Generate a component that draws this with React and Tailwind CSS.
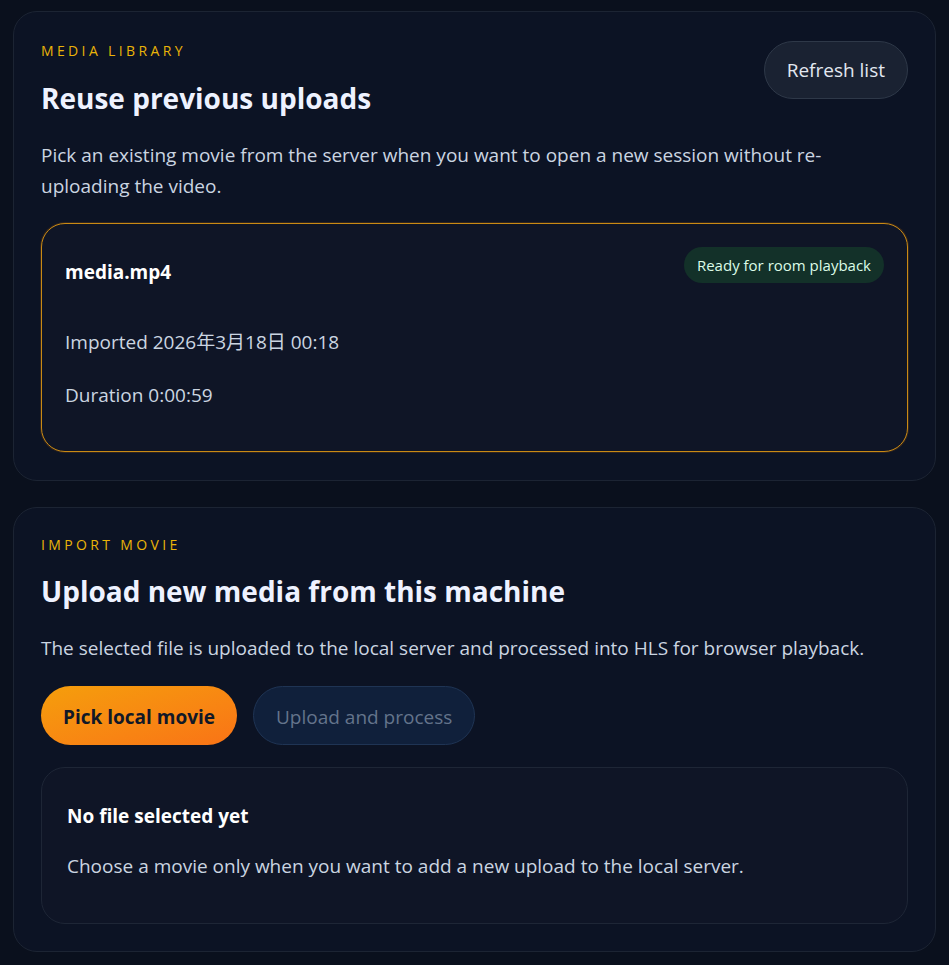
export default function App() {
  return (
    <div
      className="min-h-[965px] bg-[#0a101d] px-[13px] py-[11px] text-[#cbd5e1]"
      style={{ fontFamily: '"Open Sans", "Noto Sans CJK JP", sans-serif' }}
    >
      <div className="flex flex-col gap-[26px]">
        {/* Media library */}
        <section className="rounded-[24px] border border-[#1c2433] bg-[#0c1324] px-[27px] pt-[30px] pb-[28px]">
          <div className="flex items-start justify-between">
            <div>
              <div className="text-[14px] uppercase leading-[18px] tracking-[0.24em] text-[#eab308]">Media library</div>
              <h2 className="mt-[21px] text-[28px] font-bold leading-[34px] text-[#eef2ff]">Reuse previous uploads</h2>
            </div>
            <button className="mt-[-1px] h-[58px] rounded-full border border-[#2e3848] bg-[#1a2232] px-[22px] text-[19px] text-[#e2e8f0]">
              Refresh list
            </button>
          </div>
          <p className="mt-[25px] text-[19px] leading-[31px] text-[#cbd5e1]">
            Pick an existing movie from the server when you want to open a new session without re-uploading the video.
          </p>
          <div className="mt-[21px] rounded-[24px] border border-[#c98a14] bg-[#0f1526] px-[23px] pt-[23px] pb-[43px] shadow-[0_0_0_1px_rgba(217,119,6,0.18)]">
            <div className="flex items-start justify-between">
              <div className="pt-[13px] text-[19px] font-bold leading-[24px] text-white">media.mp4</div>
              <span className="rounded-full bg-[#133129] px-[13px] py-[7px] text-[15px] leading-[22px] text-[#dcfce7]">
                Ready for room playback
              </span>
            </div>
            <div className="mt-[45px] text-[19px] leading-[26px]">Imported 2026年3月18日 00:18</div>
            <div className="mt-[27px] text-[19px] leading-[26px]">Duration 0:00:59</div>
          </div>
        </section>

        {/* Import movie */}
        <section className="rounded-[24px] border border-[#1c2433] bg-[#0c1324] px-[27px] pt-[28px] pb-[27px]">
          <div className="text-[14px] uppercase leading-[18px] tracking-[0.24em] text-[#eab308]">Import movie</div>
          <h2 className="mt-[20px] text-[28px] font-bold leading-[34px] text-[#eef2ff]">Upload new media from this machine</h2>
          <p className="mt-[25px] text-[19px] leading-[31px]">
            The selected file is uploaded to the local server and processed into HLS for browser playback.
          </p>
          <div className="mt-[22px] flex gap-[16px]">
            <button className="h-[59px] rounded-full bg-gradient-to-br from-[#f59e0b] to-[#f97316] px-[22px] pt-[3px] text-[19px] font-bold text-[#111827]">
              Pick local movie
            </button>
            <button className="h-[59px] rounded-full border border-[#1f3454] bg-[#10203b] px-[22px] pt-[3px] text-[19px] text-[#64748b]">
              Upload and process
            </button>
          </div>
          <div className="mt-[22px] rounded-[24px] border border-[#1e2636] bg-[#0f1526] px-[25px] pt-[35px] pb-[43px]">
            <div className="text-[19px] font-bold leading-[26px] text-white">No file selected yet</div>
            <p className="mt-[23px] text-[19px] leading-[28px]">
              Choose a movie only when you want to add a new upload to the local server.
            </p>
          </div>
        </section>
      </div>
    </div>
  );
}
